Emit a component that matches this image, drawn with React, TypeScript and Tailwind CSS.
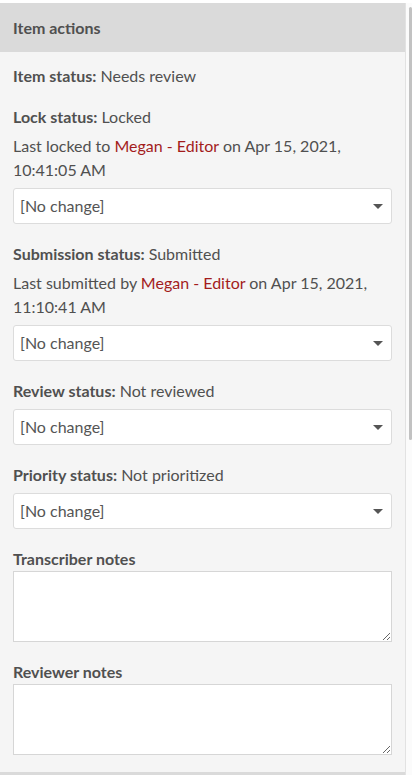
import { ChangeEvent, useState } from "react";

const Select = () => {
  const [value, setValue] = useState("");
  return (
    <div className="relative">
      <select
        value={value}
        onChange={(e: ChangeEvent<HTMLSelectElement>) => setValue(e.target.value)}
        className="block h-[36px] w-full appearance-none rounded-[3px] border border-[#dcdcdc] bg-white pl-[6px] pr-8 text-[16px] text-[#555] outline-none"
      >
        <option value="">[No change]</option>
        <option value="a">Option</option>
      </select>
      <svg
        className="pointer-events-none absolute right-[9px] top-[16px]"
        width="10"
        height="5"
        viewBox="0 0 10 5"
      >
        <path d="M0 0h10L5 5z" fill="#555" />
      </svg>
    </div>
  );
};

const Status = ({ label, value }: { label: string; value: string }) => (
  <p className="leading-[24px]">
    <span className="font-bold">{label}:</span> {value}
  </p>
);

const App = () => {
  return (
    <div
      className="flex h-[775px] w-[412px] bg-white pt-[3px] text-[16px] text-[#505050]"
      style={{ fontFamily: "Lato, 'Open Sans', sans-serif" }}
    >
      <div className="flex w-[406px] flex-col border-r border-[#e2e2e2]">
        <div className="flex h-[49px] items-center bg-[#dadada] px-[13px] font-bold">
          Item actions
        </div>
        <div className="flex flex-1 flex-col border-b-[3px] border-[#dadada] bg-[#f5f5f5] px-[13px] pt-[12px]">
          <Status label="Item status" value="Needs review" />

          <div className="mt-[17px]">
            <Status label="Lock status" value="Locked" />
            <p className="mt-[5px] leading-[24px]">
              Last locked to <span className="text-[#a31c1c]">Megan - Editor</span> on Apr 15, 2021,
              10:41:05 AM
            </p>
            <div className="mt-[6px]">
              <Select />
            </div>
          </div>

          <div className="mt-[18px]">
            <Status label="Submission status" value="Submitted" />
            <p className="mt-[5px] leading-[24px]">
              Last submitted by <span className="text-[#a31c1c]">Megan - Editor</span> on Apr 15,
              2021, 11:10:41 AM
            </p>
            <div className="mt-[6px]">
              <Select />
            </div>
          </div>

          <div className="mt-[18px]">
            <Status label="Review status" value="Not reviewed" />
            <div className="mt-[6px]">
              <Select />
            </div>
          </div>

          <div className="mt-[18px]">
            <Status label="Priority status" value="Not prioritized" />
            <div className="mt-[6px]">
              <Select />
            </div>
          </div>

          <div className="mt-[18px]">
            <label className="block font-bold leading-[24px]">Transcriber notes</label>
            <textarea className="block h-[71px] w-full border border-[#d6d6d6] bg-white p-1 outline-none" />
          </div>

          <div className="mt-[18px]">
            <label className="block font-bold leading-[24px]">Reviewer notes</label>
            <textarea className="block h-[71px] w-full border border-[#d6d6d6] bg-white p-1 outline-none" />
          </div>
        </div>
      </div>
      <div className="flex w-[6px] justify-end bg-[#fbfbfb] pt-[4px]">
        <div className="h-[433px] w-[3px] rounded-sm bg-[#c2c2c2]" />
      </div>
    </div>
  );
};

export default App;
